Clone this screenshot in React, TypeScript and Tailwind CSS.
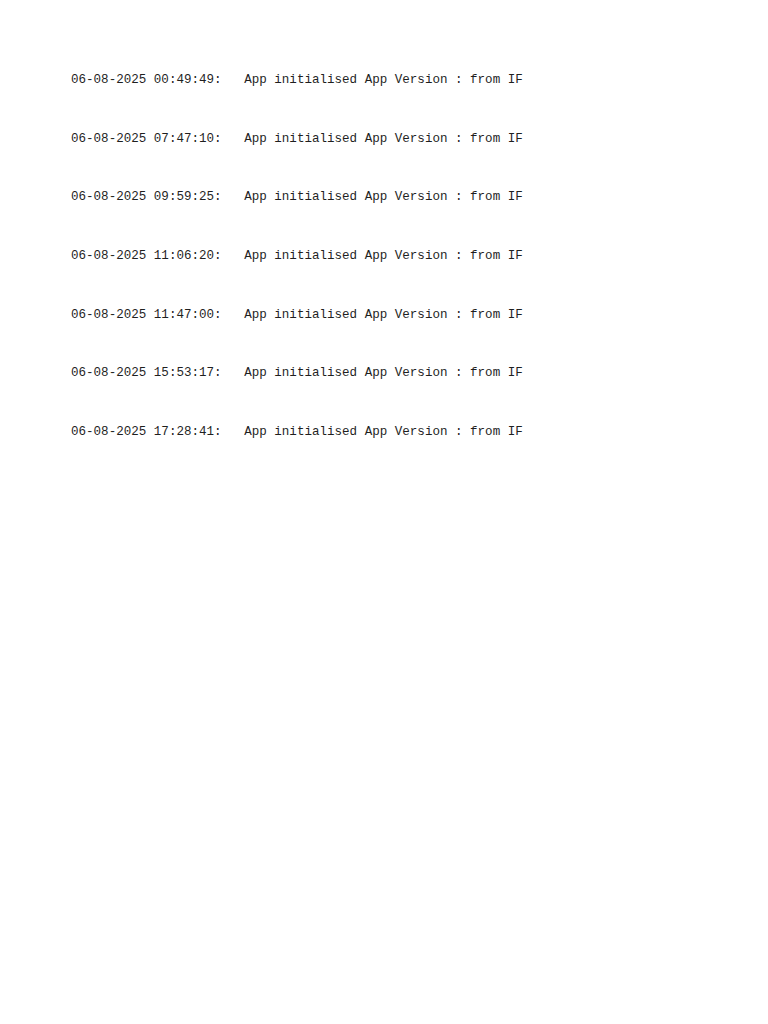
const logs = [
  "06-08-2025 00:49:49:",
  "06-08-2025 07:47:10:",
  "06-08-2025 09:59:25:",
  "06-08-2025 11:06:20:",
  "06-08-2025 11:47:00:",
  "06-08-2025 15:53:17:",
  "06-08-2025 17:28:41:",
];

const App = () => {
  return (
    <div className="min-h-screen bg-white pl-[71px] pt-[70px] font-['Liberation_Mono',monospace] text-[12.56px] text-[#1f1f1f]">
      <div className="flex flex-col">
        {logs.map((time) => (
          <p key={time} className="h-[58.67px] leading-[20px] whitespace-pre">
            {`${time}   App initialised App Version : from IF`}
          </p>
        ))}
      </div>
    </div>
  );
};

export default App;
